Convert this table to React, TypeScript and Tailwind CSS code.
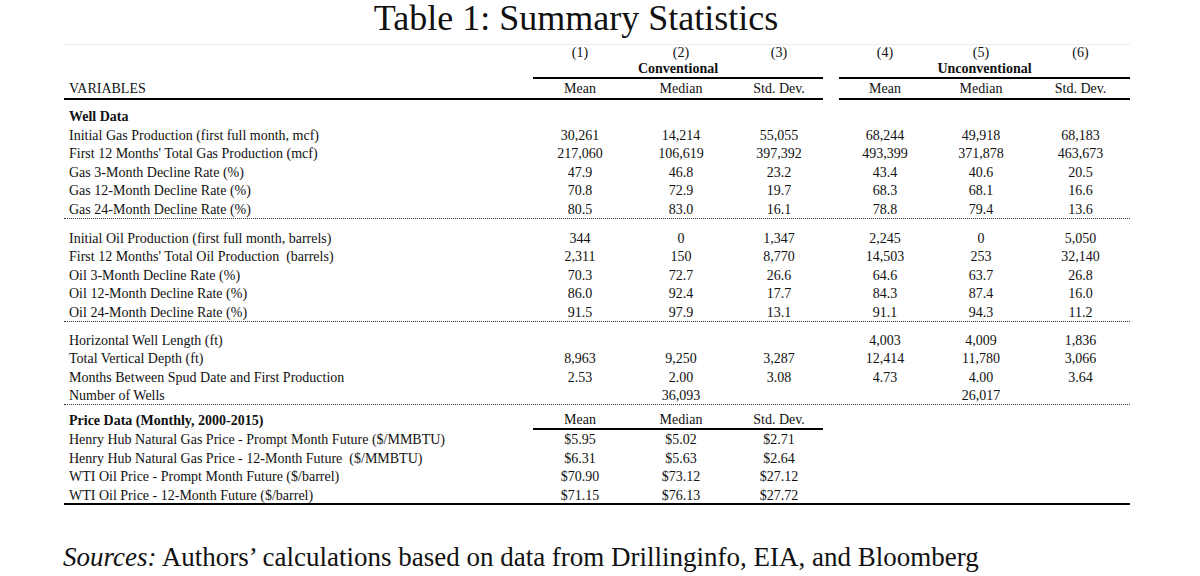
const COLS =
  "grid grid-cols-[469px_94px_108px_88px_16px_92px_100px_99px]";

type Row = { label: string; v: string[] };

const WELL_GAS: Row[] = [
  { label: "Initial Gas Production (first full month, mcf)", v: ["30,261", "14,214", "55,055", "68,244", "49,918", "68,183"] },
  { label: "First 12 Months' Total Gas Production (mcf)", v: ["217,060", "106,619", "397,392", "493,399", "371,878", "463,673"] },
  { label: "Gas 3-Month Decline Rate (%)", v: ["47.9", "46.8", "23.2", "43.4", "40.6", "20.5"] },
  { label: "Gas 12-Month Decline Rate (%)", v: ["70.8", "72.9", "19.7", "68.3", "68.1", "16.6"] },
  { label: "Gas 24-Month Decline Rate (%)", v: ["80.5", "83.0", "16.1", "78.8", "79.4", "13.6"] },
];

const WELL_OIL: Row[] = [
  { label: "Initial Oil Production (first full month, barrels)", v: ["344", "0", "1,347", "2,245", "0", "5,050"] },
  { label: "First 12 Months' Total Oil Production  (barrels)", v: ["2,311", "150", "8,770", "14,503", "253", "32,140"] },
  { label: "Oil 3-Month Decline Rate (%)", v: ["70.3", "72.7", "26.6", "64.6", "63.7", "26.8"] },
  { label: "Oil 12-Month Decline Rate (%)", v: ["86.0", "92.4", "17.7", "84.3", "87.4", "16.0"] },
  { label: "Oil 24-Month Decline Rate (%)", v: ["91.5", "97.9", "13.1", "91.1", "94.3", "11.2"] },
];

const WELL_OTHER: Row[] = [
  { label: "Horizontal Well Length (ft)", v: ["", "", "", "4,003", "4,009", "1,836"] },
  { label: "Total Vertical Depth (ft)", v: ["8,963", "9,250", "3,287", "12,414", "11,780", "3,066"] },
  { label: "Months Between Spud Date and First Production", v: ["2.53", "2.00", "3.08", "4.73", "4.00", "3.64"] },
  { label: "Number of Wells", v: ["", "36,093", "", "", "26,017", ""] },
];

const PRICES: Row[] = [
  { label: "Henry Hub Natural Gas Price - Prompt Month Future ($/MMBTU)", v: ["$5.95", "$5.02", "$2.71"] },
  { label: "Henry Hub Natural Gas Price - 12-Month Future  ($/MMBTU)", v: ["$6.31", "$5.63", "$2.64"] },
  { label: "WTI Oil Price - Prompt Month Future ($/barrel)", v: ["$70.90", "$73.12", "$27.12"] },
  { label: "WTI Oil Price - 12-Month Future ($/barrel)", v: ["$71.15", "$76.13", "$27.72"] },
];

function DataRow({ row }: { row: Row }) {
  const v = row.v;
  return (
    <div className={`${COLS} h-[18.6px] pt-[2px] leading-[18.6px]`}>
      <div className="whitespace-pre pl-[5px]">{row.label}</div>
      <div className="text-center">{v[0]}</div>
      <div className="text-center">{v[1]}</div>
      <div className="text-center">{v[2]}</div>
      <div />
      <div className="text-center">{v[3] ?? ""}</div>
      <div className="text-center">{v[4] ?? ""}</div>
      <div className="text-center">{v[5] ?? ""}</div>
    </div>
  );
}

function SectionTitle({ children }: { children: React.ReactNode }) {
  return (
    <div className={`${COLS} h-[18.6px] pt-[2px] leading-[18.6px]`}>
      <div className="pl-[5px] font-bold">{children}</div>
    </div>
  );
}

export default function App() {
  return (
    <div className="h-[576px] w-[1200px] bg-white font-['Liberation_Serif',serif] text-[14px] text-[#111]">
      <h1 className="h-[44px] pr-[48px] text-center text-[36px] leading-[36px]">Table 1: Summary Statistics</h1>

      <div className="ml-[64px] w-[1066px] border-t border-[#ececec]">
        {/* column numbers */}
        <div className={`${COLS} h-[16px] leading-[16px]`}>
          <div />
          <div className="text-center">(1)</div>
          <div className="text-center">(2)</div>
          <div className="text-center">(3)</div>
          <div />
          <div className="text-center">(4)</div>
          <div className="text-center">(5)</div>
          <div className="text-center">(6)</div>
        </div>

        {/* group names */}
        <div className={`${COLS} h-[17px] leading-[16px]`}>
          <div />
          <div className="col-span-3 border-b-2 border-black text-center font-bold">Conventional</div>
          <div />
          <div className="col-span-3 border-b-2 border-black text-center font-bold">Unconventional</div>
        </div>

        {/* stat names */}
        <div className={`${COLS} h-[20px] leading-[18px]`}>
          <div className="border-b-2 border-black pl-[5px] pt-[2px]">VARIABLES</div>
          <div className="border-b-2 border-black pt-[2px] text-center">Mean</div>
          <div className="border-b-2 border-black pt-[2px] text-center">Median</div>
          <div className="border-b-2 border-black pt-[2px] text-center">Std. Dev.</div>
          <div />
          <div className="border-b-2 border-black pt-[2px] text-center">Mean</div>
          <div className="border-b-2 border-black pt-[2px] text-center">Median</div>
          <div className="border-b-2 border-black pt-[2px] text-center">Std. Dev.</div>
        </div>

        <div className="border-b border-dotted border-[#333] pt-[8px]">
          <SectionTitle>Well Data</SectionTitle>
          {WELL_GAS.map((r) => (
            <DataRow key={r.label} row={r} />
          ))}
        </div>

        <div className="border-b border-dotted border-[#333] pt-[9px]">
          {WELL_OIL.map((r) => (
            <DataRow key={r.label} row={r} />
          ))}
        </div>

        <div className="border-b border-dotted border-[#333] pt-[8px]">
          {WELL_OTHER.map((r) => (
            <DataRow key={r.label} row={r} />
          ))}
        </div>

        <div className="border-b-2 border-black pt-[5px]">
          <div className={`${COLS} h-[19px] leading-[17px]`}>
            <div className="pl-[5px] pt-[2px] font-bold">Price Data (Monthly, 2000-2015)</div>
            <div className="border-b-2 border-black pt-[1px] text-center">Mean</div>
            <div className="border-b-2 border-black pt-[1px] text-center">Median</div>
            <div className="border-b-2 border-black pt-[1px] text-center">Std. Dev.</div>
          </div>
          {PRICES.map((r) => (
            <DataRow key={r.label} row={r} />
          ))}
        </div>
      </div>

      <p className="ml-[63px] mt-[36px] text-[27px] leading-[32px]">
        <i>Sources:</i> Authors’ calculations based on data from Drillinginfo, EIA, and Bloomberg
      </p>
    </div>
  );
}
